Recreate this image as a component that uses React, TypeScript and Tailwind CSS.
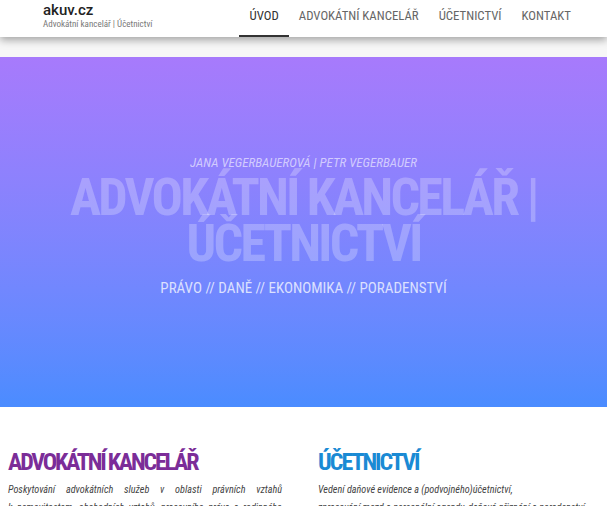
export default function App() {
  const cond = { fontFamily: '"Roboto Condensed", "DejaVu Sans Condensed", Roboto, sans-serif' };
  return (
    <div className="w-[607px] h-[506px] overflow-hidden bg-white" style={{ fontFamily: 'Roboto, "Liberation Sans", sans-serif' }}>
      <header className="relative z-10 h-[37px] bg-white shadow-[0_3px_8px_rgba(0,0,0,0.35)] flex items-stretch">
        <div className="pl-[43px] pt-[1px] flex flex-col">
          <span className="text-[15px] leading-[18px] font-medium text-[#222]">akuv.cz</span>
          <span className="text-[9px] leading-[10px] text-[#777]" style={cond}>Advokátní kancelář | Účetnictví</span>
        </div>
        <nav className="ml-auto mr-[26px] flex items-stretch text-[12.8px] leading-[16px] text-[#666]" style={cond}>
          <a className="px-[10px] pt-[8px] flex justify-center text-[#333] border-b-2 border-[#333]">ÚVOD</a>
          <a className="px-[10px] pt-[8px] flex">ADVOKÁTNÍ KANCELÁŘ</a>
          <a className="px-[10px] pt-[8px] flex">ÚČETNICTVÍ</a>
          <a className="px-[10px] pt-[8px] flex">KONTAKT</a>
        </nav>
      </header>
      <div className="h-[20px] bg-[#f7f7f7]" />
      <section className="h-[350px] bg-gradient-to-b from-[#a77afc] to-[#4a8cff] flex flex-col items-center pt-[98px] text-center" style={cond}>
        <p className="italic text-[13px] leading-[16px] text-white/60">JANA VEGERBAUEROVÁ | PETR VEGERBAUER</p>
        <h1 className="mt-[4px] text-[52px] leading-[46px] font-bold tracking-[-2.7px] text-white/25 w-[560px]">ADVOKÁTNÍ KANCELÁŘ | ÚČETNICTVÍ</h1>
        <p className="mt-[12px] text-[15px] leading-[18px] text-white/75">PRÁVO // DANĚ // EKONOMIKA // PORADENSTVÍ</p>
      </section>
      <section className="flex px-[8px] pt-[41px]" style={cond}>
        <div className="w-[274px]">
          <h2 className="text-[24px] leading-[28px] font-bold tracking-[-2.2px] text-[#7b2d98]">ADVOKÁTNÍ KANCELÁŘ</h2>
          <p className="mt-[5px] italic text-[10.2px] leading-[18px] text-[#444] text-justify">
            Poskytování advokátních služeb v oblasti právních vztahů k{'\u00a0'}nemovitostem, obchodních vztahů, pracovního práva a rodinného práva.
          </p>
        </div>
        <div className="ml-[36px] flex-1">
          <h2 className="text-[24px] leading-[28px] font-bold tracking-[-2px] text-[#1a8ad4]">ÚČETNICTVÍ</h2>
          <p className="mt-[5px] italic text-[10.2px] leading-[18px] text-[#444]">
            Vedení daňové evidence a (podvojného)účetnictví,<br />
            zpracování mezd a personální agendy, daňová přiznání a poradenství.
          </p>
        </div>
      </section>
    </div>
  );
}
